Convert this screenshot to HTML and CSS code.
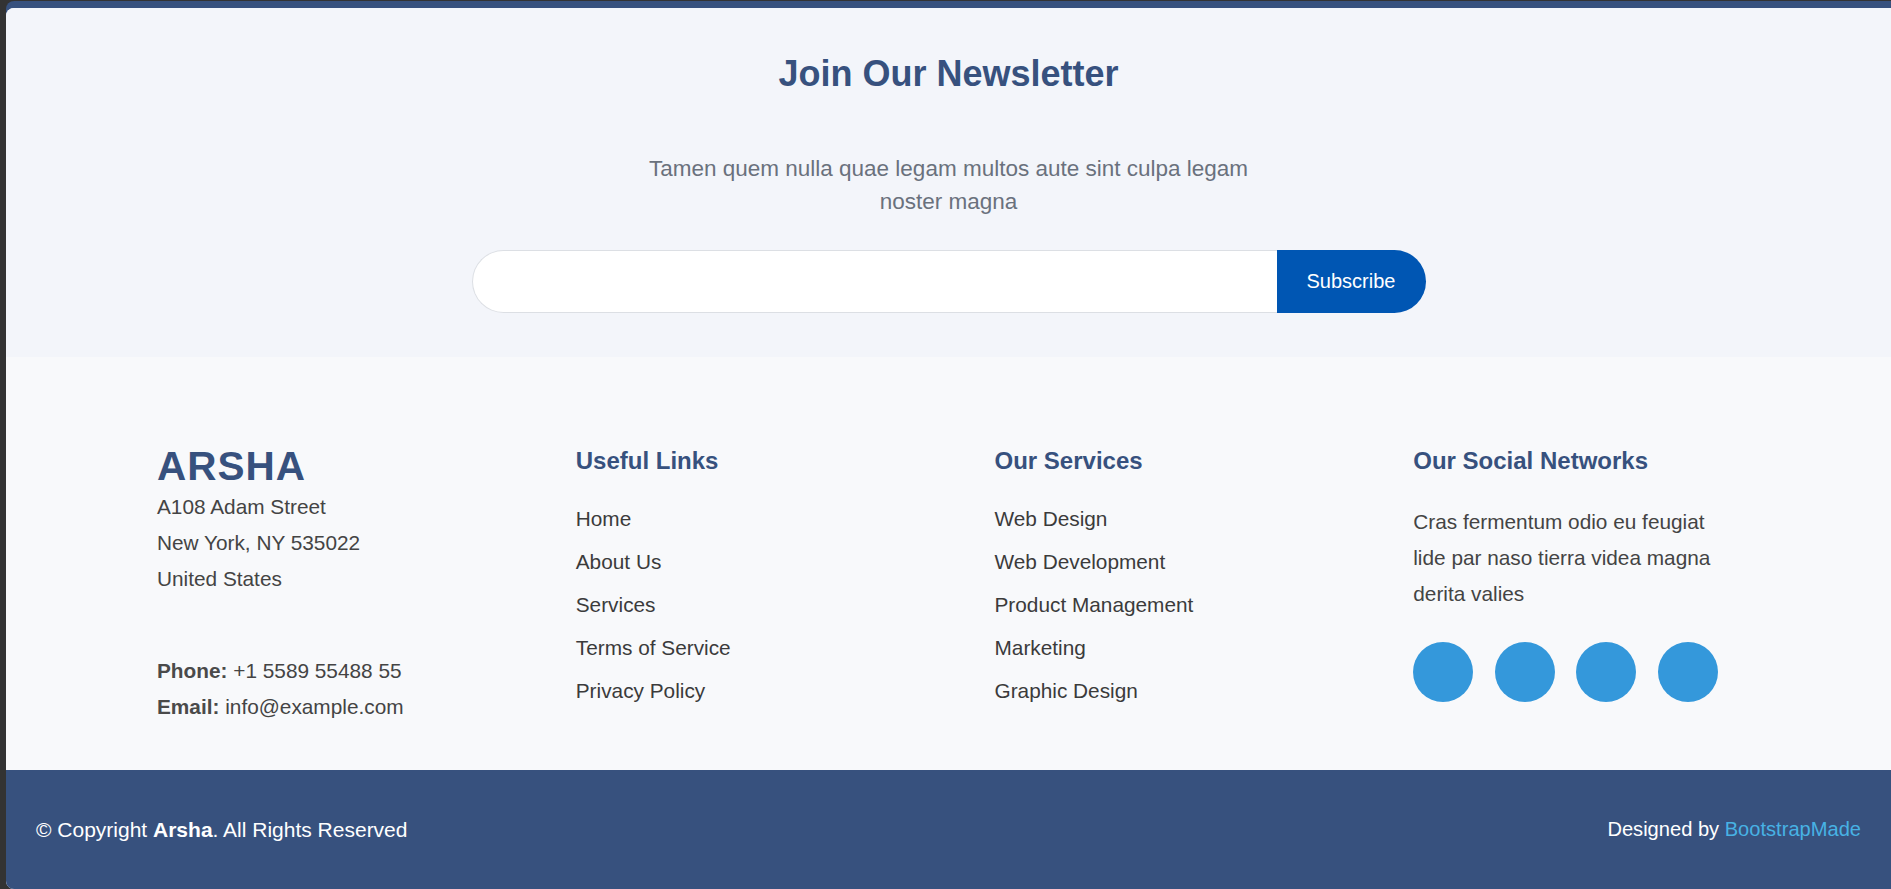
FILE: index.html
```html
<!DOCTYPE html>
<html lang="en">
<head>
<meta charset="utf-8">
<title>Arsha Footer</title>
<link rel="stylesheet" href="styles.css">
</head>
<body>
<div class="frame">
  <div class="page">
    <section class="newsletter">
      <h2 class="nl-title">Join Our Newsletter</h2>
      <p class="nl-text">Tamen quem nulla quae legam multos aute sint culpa legam noster magna</p>
      <form class="nl-form" onsubmit="return false;">
        <input class="nl-input" type="email" name="email" aria-label="Email">
        <button class="nl-button" type="submit">Subscribe</button>
      </form>
    </section>

    <section class="footer-top">
      <div class="col contact-col">
        <h3 class="brand">ARSHA</h3>
        <p class="info">A108 Adam Street<br>New York, NY 535022<br>United States</p>
        <p class="info contact"><strong>Phone:</strong> +1 5589 55488 55<br><strong>Email:</strong> info@example.com</p>
      </div>
      <div class="col">
        <h4 class="col-title">Useful Links</h4>
        <ul class="links">
          <li><a href="#">Home</a></li>
          <li><a href="#">About Us</a></li>
          <li><a href="#">Services</a></li>
          <li><a href="#">Terms of Service</a></li>
          <li><a href="#">Privacy Policy</a></li>
        </ul>
      </div>
      <div class="col">
        <h4 class="col-title">Our Services</h4>
        <ul class="links">
          <li><a href="#">Web Design</a></li>
          <li><a href="#">Web Development</a></li>
          <li><a href="#">Product Management</a></li>
          <li><a href="#">Marketing</a></li>
          <li><a href="#">Graphic Design</a></li>
        </ul>
      </div>
      <div class="col">
        <h4 class="col-title">Our Social Networks</h4>
        <p class="social-text">Cras fermentum odio eu feugiat lide par naso tierra videa magna derita valies</p>
        <div class="socials">
          <a class="social" href="#" aria-label="Twitter"></a>
          <a class="social" href="#" aria-label="Facebook"></a>
          <a class="social" href="#" aria-label="Instagram"></a>
          <a class="social" href="#" aria-label="LinkedIn"></a>
        </div>
      </div>
    </section>

    <footer class="footer-bottom">
      <div class="copyright">© Copyright <strong>Arsha</strong>. All Rights Reserved</div>
      <div class="credits">Designed by <a href="#">BootstrapMade</a></div>
    </footer>
  </div>
</div>
</body>
</html>
```
FILE: styles.css
```css
* { box-sizing: border-box; }

html, body { margin: 0; }

body {
  background: #333333;
  padding: 1px 0 0 6px;
  font-family: "Liberation Sans", Arial, sans-serif;
}

.frame {
  background: #37517e;
  border-radius: 8px 0 0 8px;
  padding-top: 7px;
}

.page {
  background: #f3f5fa;
  border-radius: 8px 0 0 8px;
  overflow: hidden;
}

/* Newsletter */
.newsletter {
  background: #f3f5fa;
  padding: 44px 0 44px;
  text-align: center;
}

.nl-title {
  margin: 0;
  font-size: 36px;
  line-height: 43px;
  font-weight: 700;
  color: #37517e;
}

.nl-text {
  margin: 57px auto 32px;
  max-width: 640px;
  font-size: 22.5px;
  line-height: 33px;
  color: #6a717d;
}

.nl-form {
  display: flex;
  width: 954px;
  height: 63px;
  margin: 0 auto;
}

.nl-input {
  flex: 1;
  border: 1px solid #dcdfe4;
  border-right: 0;
  border-radius: 32px 0 0 32px;
  background: #ffffff;
  padding: 0 24px;
  font-size: 20px;
  font-family: inherit;
  outline: none;
}

.nl-button {
  width: 149px;
  border: 0;
  border-radius: 0 32px 32px 0;
  background: #0056b3;
  color: #ffffff;
  font-family: inherit;
  font-size: 20px;
  cursor: pointer;
}

/* Footer top */
.footer-top {
  background: #f8f9fb;
  display: grid;
  grid-template-columns: repeat(4, 1fr);
  padding: 87px 59px 45px 151px;
}

.brand {
  margin: 0;
  font-size: 40.5px;
  line-height: 45px;
  letter-spacing: 1px;
  font-weight: 700;
  color: #37517e;
}

.info {
  margin: 0;
  font-size: 20.8px;
  line-height: 36px;
  color: #444444;
}

.info.contact {
  margin-top: 56px;
}

.info strong {
  color: #4a4a4a;
}

.col-title {
  margin: 2px 0 0;
  font-size: 24px;
  line-height: 29px;
  font-weight: 700;
  color: #37517e;
}

.links {
  list-style: none;
  margin: 21.5px 0 0;
  padding: 0;
}

.links li {
  padding: 10px 0;
  line-height: 23px;
  font-size: 20.8px;
}

.links a {
  color: #3b3b3b;
  text-decoration: none;
}

.social-text {
  margin: 29px 0 0;
  max-width: 320px;
  font-size: 20.8px;
  line-height: 36px;
  color: #444444;
}

.socials {
  display: flex;
  gap: 21.5px;
  margin-top: 30px;
}

.social {
  width: 60px;
  height: 60px;
  border-radius: 50%;
  background: #3498db;
}

/* Footer bottom */
.footer-bottom {
  height: 119px;
  background: #37517e;
  color: #ffffff;
  display: flex;
  align-items: center;
  justify-content: space-between;
  padding: 0 30px;
}

.copyright {
  font-size: 21px;
}

.credits {
  font-size: 20.1px;
}

.credits a {
  color: #47b2e4;
  text-decoration: none;
}
```
